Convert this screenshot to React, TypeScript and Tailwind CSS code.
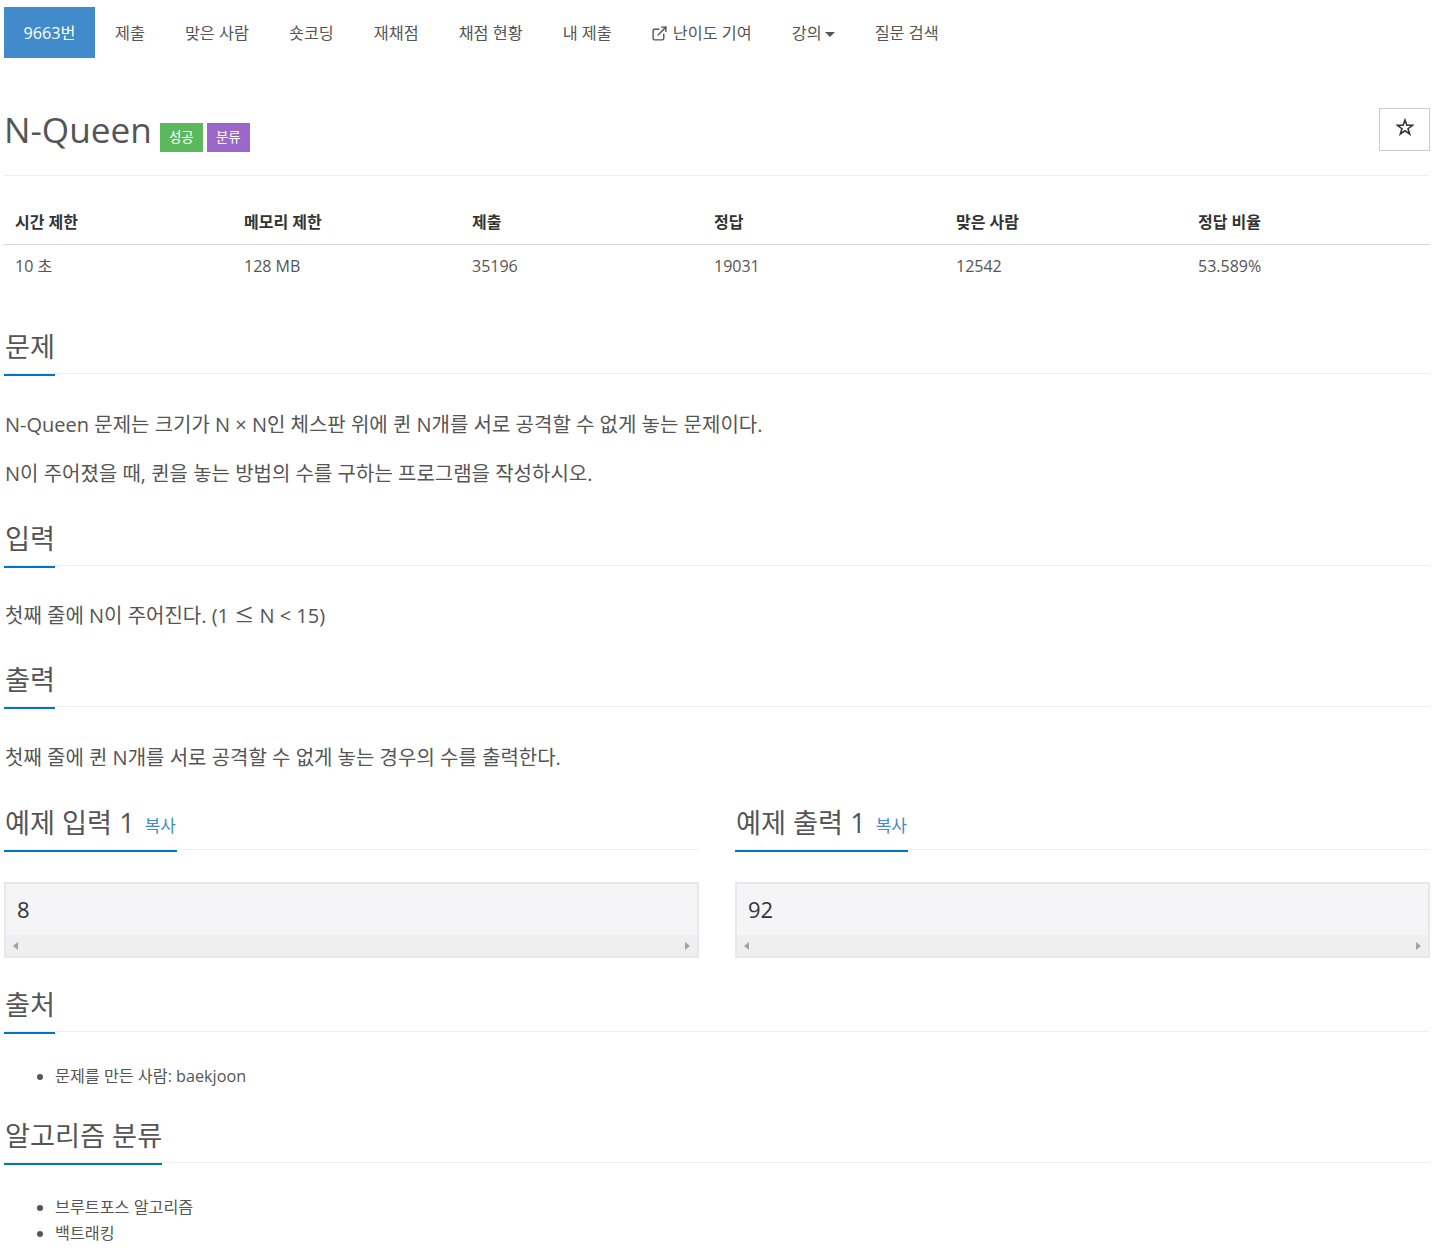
import React from 'react';
import { ExternalLink } from 'lucide-react';

const navItems = ['제출', '맞은 사람', '숏코딩', '재채점', '채점 현황', '내 제출'];

const stats = [
  { label: '시간 제한', value: '10 초' },
  { label: '메모리 제한', value: '128 MB' },
  { label: '제출', value: '35196' },
  { label: '정답', value: '19031' },
  { label: '맞은 사람', value: '12542' },
  { label: '정답 비율', value: '53.589%' },
];

const Headline: React.FC<{ title: string; className?: string }> = ({ title, className }) => (
  <div className={`h-[46px] border-b border-[#eeeeee] ${className ?? ''}`}>
    <h2 className="inline-block h-[48px] border-b-2 border-[#0076c0] pl-px text-[27.2px] leading-[38px] text-[#555555]">
      {title}
    </h2>
  </div>
);

const Sample: React.FC<{ title: string; value: string }> = ({ title, value }) => (
  <div className="min-w-0">
    <div className="h-[46px] border-b border-[#eeeeee]">
      <div className="inline-flex h-[48px] items-baseline gap-[10px] border-b-2 border-[#0076c0] pl-px pr-px">
        <h2 className="text-[27.2px] leading-[38px] text-[#555555]">{title}</h2>
        <a className="-translate-y-[1px] text-[17px] text-[#428bca]">복사</a>
      </div>
    </div>
    <div className="mt-[32px] border-2 border-[#e8e8e8] bg-[#f5f5f7]">
      <div className="h-[51px] pl-[11px] pt-[11px] text-[22px] leading-[28px] text-[#333333]">{value}</div>
      <div className="flex h-[21px] items-center justify-between bg-[#efefef] px-[7px]">
        <span className="h-0 w-0 border-y-[4px] border-r-[5px] border-y-transparent border-r-[#a3a3a3]" />
        <span className="h-0 w-0 border-y-[4px] border-l-[5px] border-y-transparent border-l-[#a3a3a3]" />
      </div>
    </div>
  </div>
);

export default function App() {
  return (
    <div
      className="h-[1258px] overflow-hidden bg-white pl-[4px] pr-[8px] pt-[7px] text-[#555555]"
      style={{ fontFamily: '"Open Sans", "Noto Sans CJK KR", sans-serif' }}
    >
      {/* Tabs */}
      <ul className="flex h-[51px] text-[16.25px]">
        <li className="flex w-[91px] items-center justify-center bg-[#428bca] pt-px text-white">9663번</li>
        {navItems.map((item) => (
          <li key={item} className="flex items-center px-[20px] pt-px">{item}</li>
        ))}
        <li className="flex items-center gap-[5px] pl-[19px] pr-[20px] pt-px">
          <ExternalLink className="h-[17px] w-[17px]" strokeWidth={2} />
          난이도 기여
        </li>
        <li className="flex items-center gap-[3px] px-[20px] pt-px">
          강의
          <span className="mt-[2px] h-0 w-0 border-x-[5px] border-t-[5px] border-x-transparent border-t-[#555555]" />
        </li>
        <li className="flex items-center px-[20px] pt-px">질문 검색</li>
      </ul>

      {/* Title */}
      <div className="mt-[50px] flex h-[68px] items-start justify-between border-b border-[#eeeeee]">
        <div className="flex items-start">
          <h1 className="text-[35.2px] leading-[42px]">N-Queen</h1>
          <span className="ml-[8px] mt-[15px] flex h-[29px] w-[43px] items-center justify-center bg-[#5cb85c] text-[13.5px] text-white">성공</span>
          <span className="ml-[4px] mt-[15px] flex h-[29px] w-[43px] items-center justify-center bg-[#9b68c7] text-[13.5px] text-white">분류</span>
        </div>
        <button className="flex h-[43px] w-[51px] items-start justify-center border border-[#cccccc] bg-white pt-[9px]">
          <svg viewBox="0 0 18 18" className="h-[18px] w-[18px]" fill="none" stroke="#333333" strokeWidth="1.6" strokeLinejoin="miter">
            <polygon points="9,2 10.9,7.3 16.6,7.3 12,10.7 13.7,16 9,12.8 4.3,16 6,10.7 1.4,7.3 7.1,7.3" />
          </svg>
        </button>
      </div>

      {/* Stats */}
      <div className="mt-[24px] grid grid-cols-[229px_228px_242px_242px_242px_1fr] text-[16px]">
        {stats.map((s) => (
          <div key={s.label} className="flex h-[45px] items-center border-b border-[#d5d5d5] pb-[1px] pl-[11px] font-bold text-[#333333]">{s.label}</div>
        ))}
        {stats.map((s) => (
          <div key={s.value} className="flex h-[42px] items-center pl-[11px]">{s.value}</div>
        ))}
      </div>

      {/* Problem */}
      <Headline title="문제" className="mt-[41px]" />
      <div className="mt-[38px] pl-px text-[20px] leading-[26px]">
        <p>N-Queen 문제는 크기가 N × N인 체스판 위에 퀸 N개를 서로 공격할 수 없게 놓는 문제이다.</p>
        <p className="mt-[23px]">N이 주어졌을 때, 퀸을 놓는 방법의 수를 구하는 프로그램을 작성하시오.</p>
      </div>

      <Headline title="입력" className="mt-[33px]" />
      <p className="mt-[37px] pl-px text-[20px] leading-[26px]">
        첫째 줄에 N이 주어진다. (1 <span className="font-['Noto_Sans_CJK_KR'] leading-none">≤</span> N &lt; 15)
      </p>

      <Headline title="출력" className="mt-[32px]" />
      <p className="mt-[38px] pl-px text-[20px] leading-[26px]">첫째 줄에 퀸 N개를 서로 공격할 수 없게 놓는 경우의 수를 출력한다.</p>

      {/* Samples */}
      <div className="mt-[33px] grid grid-cols-2 gap-[36px]">
        <Sample title="예제 입력 1" value="8" />
        <Sample title="예제 출력 1" value="92" />
      </div>

      <Headline title="출처" className="mt-[28px]" />
      <ul className="mt-[31px] list-disc pl-[51px] text-[16.2px] leading-[26px]">
        <li>문제를 만든 사람: baekjoon</li>
      </ul>

      <Headline title="알고리즘 분류" className="mt-[28px]" />
      <ul className="mt-[31px] list-disc pl-[51px] text-[16.2px] leading-[26px]">
        <li>브루트포스 알고리즘</li>
        <li>백트래킹</li>
      </ul>
    </div>
  );
}
